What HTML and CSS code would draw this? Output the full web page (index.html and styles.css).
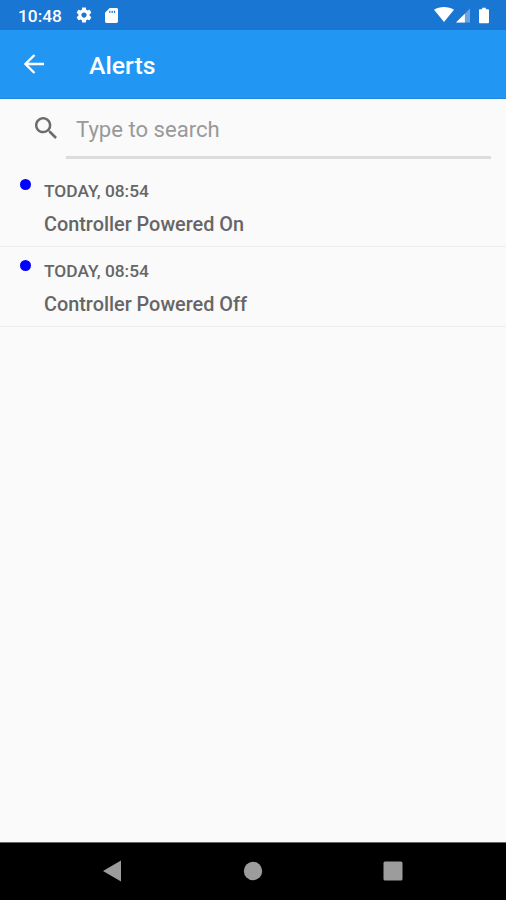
FILE: index.html
```html
<!DOCTYPE html>
<html lang="en">
<head>
<meta charset="utf-8">
<title>Alerts</title>
<link rel="stylesheet" href="styles.css">
</head>
<body>
<div class="screen">
  <div class="status">
    <span class="clock">10:48</span>
    <svg class="gear" viewBox="0 0 24 24"><path d="M19.43 12.98c.04-.32.07-.64.07-.98s-.03-.66-.07-.98l2.11-1.65c.19-.15.24-.42.12-.64l-2-3.46c-.12-.22-.39-.3-.61-.22l-2.49 1c-.52-.4-1.08-.73-1.69-.98l-.38-2.65C14.46 2.18 14.25 2 14 2h-4c-.25 0-.46.18-.49.42l-.38 2.65c-.61.25-1.17.59-1.69.98l-2.49-1c-.23-.09-.49 0-.61.22l-2 3.46c-.13.22-.07.49.12.64l2.11 1.65c-.04.32-.07.65-.07.98s.03.66.07.98l-2.11 1.65c-.19.15-.24.42-.12.64l2 3.46c.12.22.39.3.61.22l2.49-1c.52.4 1.08.73 1.69.98l.38 2.65c.03.24.24.42.49.42h4c.25 0 .46-.18.49-.42l.38-2.65c.61-.25 1.17-.59 1.69-.98l2.49 1c.23.09.49 0 .61-.22l2-3.46c.12-.22.07-.49-.12-.64l-2.11-1.65zM12 15.5c-1.93 0-3.5-1.57-3.5-3.5s1.57-3.5 3.5-3.5 3.5 1.57 3.5 3.5-1.57 3.5-3.5 3.5z"/></svg>
    <svg class="card" viewBox="0 0 14 16"><path fill-rule="evenodd" d="M5 0h7.300Q14 0 14 1.600V14.400Q14 16 12.300 16H1.700Q0 16 0 14.400V5zM4.600 3v2.300h1.300V3zM7.100 3v2.300h1.300V3zM9.600 3v2.300h1.300V3z"/></svg>
    <span class="spacer"></span>
    <svg class="wifi" viewBox="0 0 20 15"><path d="M0 2.800C5.500-.9 14.500-.9 20 2.800L10 15z"/></svg>
    <svg class="signal" viewBox="0 0 15 15"><path opacity=".35" d="M15 0v15H0z"/><path d="M9.500 5.500v9.500H0z"/></svg>
    <svg class="battery" viewBox="0 0 11 17"><path d="M3.500 0h4v1.700H10q1 0 1 1V16q0 1-1 1H1q-1 0-1-1V2.700q0-1 1-1h2.500z"/></svg>
  </div>
  <header class="bar">
    <svg class="back" viewBox="0 0 20 20"><path d="M20 10H2M10.500 1L1.500 10l9 9"/></svg>
    <h1>Alerts</h1>
  </header>
  <main>
    <div class="search">
      <svg class="glass" viewBox="3 3 17.500 17.500"><path d="M15.500 14h-.79l-.28-.27C15.410 12.590 16 11.110 16 9.500 16 5.910 13.090 3 9.500 3S3 5.910 3 9.500 5.910 16 9.500 16c1.610 0 3.090-.59 4.230-1.570l.27.28v.79l5 4.990L20.490 19l-4.990-5zm-6 0C7.010 14 5 11.990 5 9.500S7.010 5 9.500 5 14 7.010 14 9.500 11.990 14 9.500 14z"/></svg>
      <div class="field">Type to search</div>
    </div>
    <article class="alert">
      <i class="dot"></i>
      <div><p class="time">TODAY, 08:54</p><p class="name">Controller Powered On</p></div>
    </article>
    <article class="alert">
      <i class="dot"></i>
      <div><p class="time">TODAY, 08:54</p><p class="name">Controller Powered Off</p></div>
    </article>
  </main>
  <nav class="nav">
    <svg viewBox="0 0 20 22"><path d="M18 .5v21L0 11z"/></svg>
    <svg viewBox="0 0 20 20"><circle cx="10" cy="10" r="9.200"/></svg>
    <svg viewBox="0 0 20 20"><rect x=".5" y=".5" width="19" height="19" rx="1.500"/></svg>
  </nav>
</div>
</body>
</html>
```
FILE: styles.css
```css
* { box-sizing: border-box; margin: 0; padding: 0; }
body { font-family: Roboto, "Liberation Sans", sans-serif; background: #fafafa; }
svg { display: block; flex: none; }
.screen { height: 900px; display: flex; flex-direction: column; }
.status { height: 30px; background: #1976d2; color: #fff; display: flex; align-items: flex-start; padding: 0 17px 0 18px; }
.status svg { fill: #fff; }
.clock { font-size: 17.300px; font-weight: 500; line-height: 32px; width: 57px; white-space: nowrap; }
.gear { width: 18px; height: 18px; margin-top: 6px; }
.card { width: 13px; height: 15px; margin: 8px 0 0 12px; }
.spacer { flex: 1; }
.wifi { width: 20px; height: 15px; margin-top: 7px; }
.signal { width: 14px; height: 15px; margin: 8px 0 0 2px; }
.battery { width: 10px; height: 17px; margin: 7px 0 0 9px; }
.bar { height: 69px; background: #2196f3; border-bottom: 1px solid #1d87de; display: flex; align-items: center; padding: 1px 0 0 24px; color: #fff; }
.back { width: 20px; height: 20px; margin-top: -2px; fill: none; stroke: #fff; stroke-width: 2.300; }
h1 { font-size: 24.800px; font-weight: 500; line-height: 30px; margin: 3px 0 0 45px; }
main { flex: 1; }
.search { display: flex; height: 67px; padding: 0 15px 0 35px; }
.glass { width: 22px; height: 22px; margin: 18px 9px 0 0; fill: #6c6c6c; }
.field { flex: 1; height: 60px; border-bottom: 3px solid #dcdcdc; padding-left: 10px; font-size: 22.100px; line-height: 60px; color: #999; }
.alert { display: flex; height: 80.500px; padding-left: 20px; border-bottom: 1px solid #ededed; color: #666; }
.dot { flex: none; width: 11px; height: 11px; border-radius: 50%; background: #00f; margin: 13px 13px 0 0; }
.time { font-size: 17.350px; font-weight: 500; line-height: 24px; margin-top: 12.500px; }
.name { font-size: 19.850px; font-weight: 500; line-height: 28px; margin-top: 8px; }
.nav { height: 58px; background: #000; border-top: 1px solid #666; display: flex; align-items: center; justify-content: space-between; padding: 0 103px 2px; }
.nav svg { width: 20px; height: 22px; fill: #9c9c9c; }
```
